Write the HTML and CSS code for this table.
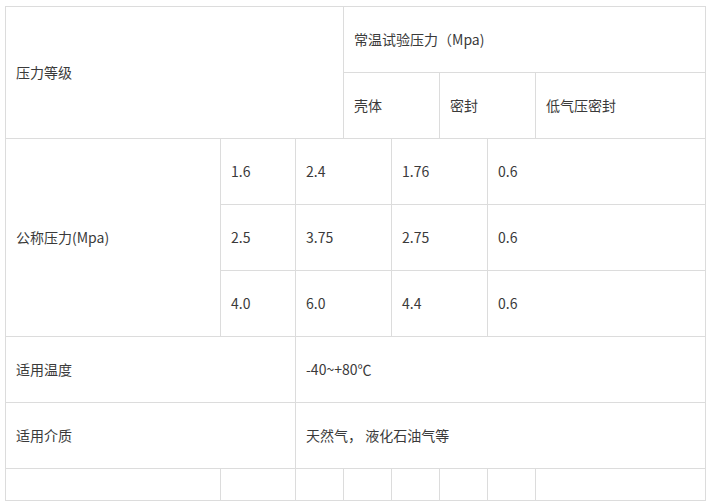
FILE: index.html
```html
<!DOCTYPE html>
<html lang="zh">
<head>
<meta charset="utf-8">
<link rel="stylesheet" href="styles.css">
</head>
<body>
<table class="spec">
  <colgroup>
    <col class="c1"><col class="c2"><col class="c3"><col class="c4"><col class="c5"><col class="c6"><col class="c7"><col class="c8">
  </colgroup>
  <tr class="r">
    <td colspan="3" rowspan="2">压力等级</td>
    <td colspan="5">常温试验压力（Mpa)</td>
  </tr>
  <tr class="r">
    <td colspan="2">壳体</td>
    <td colspan="2">密封</td>
    <td>低气压密封</td>
  </tr>
  <tr class="r">
    <td rowspan="3">公称压力(Mpa)</td>
    <td>1.6</td>
    <td colspan="2">2.4</td>
    <td colspan="2">1.76</td>
    <td colspan="2">0.6</td>
  </tr>
  <tr class="r">
    <td>2.5</td>
    <td colspan="2">3.75</td>
    <td colspan="2">2.75</td>
    <td colspan="2">0.6</td>
  </tr>
  <tr class="r">
    <td>4.0</td>
    <td colspan="2">6.0</td>
    <td colspan="2">4.4</td>
    <td colspan="2">0.6</td>
  </tr>
  <tr class="r">
    <td colspan="2">适用温度</td>
    <td colspan="6">-40~+80℃</td>
  </tr>
  <tr class="r">
    <td colspan="2">适用介质</td>
    <td colspan="6">天然气， 液化石油气等</td>
  </tr>
  <tr class="r-last">
    <td></td><td></td><td></td><td></td><td></td><td></td><td></td><td></td>
  </tr>
</table>
</body>
</html>
```
FILE: styles.css
```css
html, body {
  margin: 0;
  padding: 0;
  background: #fff;
}
body {
  padding: 6px 0 0 5px;
  font-family: "Noto Sans CJK SC", "Noto Sans", sans-serif;
  font-size: 14px;
  color: #3a3a3a;
}
.spec {
  border-collapse: collapse;
  table-layout: fixed;
  width: 700px;
}
.c1 { width: 215px; }
.c2 { width: 75px; }
.c3, .c4, .c5, .c6, .c7 { width: 48px; }
.c8 { width: 170px; }
.spec td {
  border: 1px solid #dcdcdc;
  padding: 0 10px 2px;
  vertical-align: middle;
  text-align: left;
  white-space: nowrap;
  line-height: 20px;
}
.r { height: 66px; }
.r-last { height: 32px; }
```
